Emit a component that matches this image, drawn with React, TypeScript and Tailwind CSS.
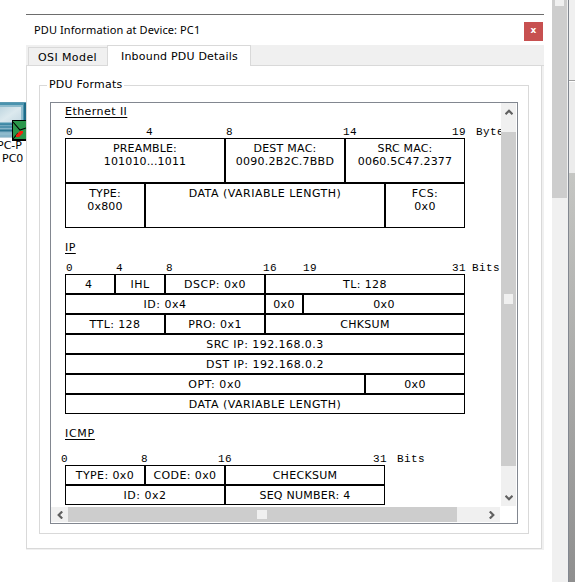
import type { ReactNode } from "react";

type Cell = { text: ReactNode; width: string };
type Tick = { text: string; width: string };

function Row({ cells, height }: { cells: Cell[]; height: string }) {
  return (
    <div className={`flex ${height}`}>
      {cells.map((cell, i) => (
        <div
          key={i}
          className={`shrink-0 whitespace-nowrap border border-black pt-[3px] text-center leading-[13px] ${cell.width}`}
        >
          {cell.text}
        </div>
      ))}
    </div>
  );
}

function Ruler({ ticks }: { ticks: Tick[] }) {
  return (
    <div className="flex h-[13px] w-[450px] pt-px font-['Liberation_Mono','Courier_New',monospace] text-[11px] leading-[13px] tracking-[0.4px]">
      {ticks.map((tick, i) => (
        <span key={i} className={`shrink-0 whitespace-nowrap ${tick.width}`}>
          {tick.text}
        </span>
      ))}
    </div>
  );
}

function Chevron({ className }: { className: string }) {
  return (
    <svg viewBox="0 0 8 6" className={`h-[6px] w-[8px] shrink-0 ${className}`} aria-hidden="true">
      <path d="M0.5 5.2 4 1.7 7.5 5.2" fill="none" stroke="#606060" strokeWidth="2.2" />
    </svg>
  );
}

function DeviceIcon() {
  return (
    <svg viewBox="0 0 26 39" className="block h-[39px] w-[26px]" aria-hidden="true">
      <defs>
        <linearGradient id="screen" x1="0" y1="0" x2="1" y2="1">
          <stop offset="0" stopColor="#bfd6e0" />
          <stop offset=".5" stopColor="#dce9ee" />
          <stop offset="1" stopColor="#c5d9e2" />
        </linearGradient>
      </defs>
      <rect width="26" height="36" y="0" fill="#86b4c8" />
      <path d="M0 0.5h26" stroke="#5c9ab2" />
      <path d="M0 1h24v21H0z" fill="#4a93ae" />
      <path d="M0 3h23v18H0z" fill="#8fbccd" />
      <rect y="5" width="21" height="15" fill="url(#screen)" />
      <path d="M24 1h2v18h-2z" fill="#1e6b88" />
      <path d="M0 22.5h12M0 25h12" stroke="#3f87a4" strokeWidth="1.5" />
      <path d="M0 28.5h12" stroke="#2d7692" strokeWidth="2" />
      <path d="M0 32h12" stroke="#8fbccd" strokeWidth="2" />
      <path d="M0 35.5h12" stroke="#b7cfd9" />
      <rect x="12.5" y="18.5" width="15" height="19" fill="#2b984c" stroke="#000" />
      <path d="M13 20l7 8 6-2M13 37l5-6" fill="none" stroke="#000" strokeWidth="1.1" />
      <path d="M16 33l4-4h3v2l-4 4h-3z" fill="#f4220b" />
      <path d="M12 38h14" stroke="#000" strokeWidth="2" />
    </svg>
  );
}

function Canvas() {
  return (
    <div className="h-[404px] w-[450px] overflow-hidden pl-[14px] text-[11px]">
      <div className="h-[22px] pt-[2px] leading-[13px] tracking-[0.45px] underline underline-offset-2">
        Ethernet II
      </div>
      <Ruler
        ticks={[
          { text: "0", width: "w-[80px] pl-px" },
          { text: "4", width: "w-[80px] pl-px" },
          { text: "8", width: "w-[118px] pl-px" },
          { text: "14", width: "w-[109px]" },
          { text: "19", width: "w-[24px]" },
          { text: "Bytes", width: "w-[40px]" },
        ]}
      />
      <div className="w-[400px]">
        <Row
          height="h-[45px]"
          cells={[
            { text: <>PREAMBLE:<br />101010...1011</>, width: "w-[160px] tracking-[0.15px]" },
            { text: <>DEST MAC:<br />0090.2B2C.7BBD</>, width: "w-[120px] tracking-[0.25px]" },
            { text: <>SRC MAC:<br />0060.5C47.2377</>, width: "w-[120px] tracking-[0.2px]" },
          ]}
        />
        <Row
          height="h-[45px]"
          cells={[
            { text: <>TYPE:<br />0x800</>, width: "w-[80px] tracking-[0.2px]" },
            { text: "DATA (VARIABLE LENGTH)", width: "w-[240px] tracking-[0.5px]" },
            { text: <>FCS:<br />0x0</>, width: "w-[80px] tracking-[0.4px]" },
          ]}
        />
      </div>
      <div className="h-[33px] pt-[13px] leading-[13px] tracking-[0.45px] underline underline-offset-2">IP</div>
      <Ruler
        ticks={[
          { text: "0", width: "w-[50px] pl-px" },
          { text: "4", width: "w-[50px] pl-px" },
          { text: "8", width: "w-[98px] pl-px" },
          { text: "16", width: "w-[40px]" },
          { text: "19", width: "w-[149px]" },
          { text: "31", width: "w-[20px]" },
          { text: "Bits", width: "w-[30px]" },
        ]}
      />
      <div className="w-[400px]">
        <Row
          height="h-[20px]"
          cells={[
            { text: "4", width: "w-[50px] pr-[3px]" },
            { text: "IHL", width: "w-[50px] tracking-[0.45px]" },
            { text: "DSCP: 0x0", width: "w-[100px] tracking-[0.5px]" },
            { text: "TL: 128", width: "w-[200px] tracking-[0.4px]" },
          ]}
        />
        <Row
          height="h-[20px]"
          cells={[
            { text: "ID: 0x4", width: "w-[200px] tracking-[0.5px]" },
            { text: "0x0", width: "w-[38px] tracking-[0.3px]" },
            { text: "0x0", width: "w-[162px] tracking-[0.3px]" },
          ]}
        />
        <Row
          height="h-[20px]"
          cells={[
            { text: "TTL: 128", width: "w-[100px] tracking-[0.4px]" },
            { text: "PRO: 0x1", width: "w-[100px] tracking-[0.4px]" },
            { text: "CHKSUM", width: "w-[200px] tracking-[0.3px]" },
          ]}
        />
        <Row
          height="h-[20px]"
          cells={[{ text: "SRC IP: 192.168.0.3", width: "w-[400px] tracking-[0.45px]" }]}
        />
        <Row
          height="h-[20px]"
          cells={[{ text: "DST IP: 192.168.0.2", width: "w-[400px] tracking-[0.45px]" }]}
        />
        <Row
          height="h-[20px]"
          cells={[
            { text: "OPT: 0x0", width: "w-[300px] tracking-[0.6px]" },
            { text: "0x0", width: "w-[100px] tracking-[0.3px]" },
          ]}
        />
        <Row
          height="h-[20px]"
          cells={[{ text: "DATA (VARIABLE LENGTH)", width: "w-[400px] tracking-[0.5px]" }]}
        />
      </div>
      <div className="h-[38px] pt-[13px] leading-[13px] tracking-[0.7px] underline underline-offset-2">ICMP</div>
      <div className="-ml-1">
        <Ruler
          ticks={[
            { text: "0", width: "w-[80px]" },
            { text: "8", width: "w-[77px]" },
            { text: "16", width: "w-[155px]" },
            { text: "31", width: "w-[24px]" },
            { text: "Bits", width: "w-[30px]" },
          ]}
        />
      </div>
      <div className="w-[320px]">
        <Row
          height="h-[20px]"
          cells={[
            { text: "TYPE: 0x0", width: "w-[80px] tracking-[0.4px]" },
            { text: "CODE: 0x0", width: "w-[80px] tracking-[0.4px]" },
            { text: "CHECKSUM", width: "w-[160px] tracking-[0.3px]" },
          ]}
        />
        <Row
          height="h-[20px]"
          cells={[
            { text: "ID: 0x2", width: "w-[160px] tracking-[0.5px]" },
            { text: "SEQ NUMBER: 4", width: "w-[160px] tracking-[0.25px]" },
          ]}
        />
      </div>
    </div>
  );
}

export default function App() {
  return (
    <div className="flex h-[582px] w-[575px] overflow-hidden bg-white font-['DejaVu_Sans',Verdana,sans-serif] text-[11px] text-black">
      <aside className="h-full w-[26px] shrink-0 overflow-hidden pt-[102px] leading-[13px]">
        <DeviceIcon />
        <div className="-ml-[3px] -mt-[2px] whitespace-nowrap">PC-P</div>
        <div className="ml-[2px] whitespace-nowrap">PC0</div>
      </aside>

      <main className="w-[518px] shrink-0 pt-[14px]">
        <header className="flex h-[31px] justify-between border-t border-[#6d6d6d] pl-2 pr-px">
          <h1 className="pt-[7px] font-['Noto_Sans','Segoe_UI',sans-serif] text-[11px] leading-4 tracking-[0.1px]">
            PDU Information at Device: PC1
          </h1>
          <button className="mt-[7px] flex h-[19px] w-[19px] items-center justify-center bg-[#c75050] pb-0.5 text-[9px] font-bold leading-none text-white">
            x
          </button>
        </header>

        <div className="flex h-[21px] items-end bg-[#f0f0f0]">
          <div className="w-[2px] self-stretch border-b border-[#d9d9d9]" />
          <div className="h-[19px] w-[79px] border border-r-0 border-[#d9d9d9] pl-[9px] pt-[3px] leading-[13px] tracking-[0.4px]">
            OSI Model
          </div>
          <div className="h-[21px] w-[144px] border border-b-0 border-[#d9d9d9] bg-white pl-[13px] pt-[4px] leading-[13px] tracking-[0.2px]">
            Inbound PDU Details
          </div>
          <div className="flex-1 self-stretch border-b border-[#d9d9d9]" />
        </div>

        <div className="h-[484px] bg-[#f0f0f0] pb-px pr-[2px]">
          <div className="h-[483px] border border-t-0 border-[#d9d9d9] bg-white px-3 pt-[12px]">
            <fieldset className="h-[456px] w-[490px] border border-[#d9d9d9] px-[10px]">
              <legend className="ml-[-3px] h-[14px] px-[2px] leading-[14px] tracking-[0.2px]">PDU Formats</legend>
              <div className="mt-[10px] h-[422px] w-[468px] border border-[#828790] bg-white">
                <div className="flex h-[404px]">
                  <Canvas />
                  <div className="flex h-[403px] w-[15px] flex-col items-center bg-[#f0f0f0]">
                    <div className="flex h-[29px] items-start pt-[6px]">
                      <Chevron className="" />
                    </div>
                    <div className="flex h-[334px] w-full items-center justify-center bg-[#cdcdcd]">
                      <div className="h-[10px] w-[9px] bg-[#f0f0f0]" />
                    </div>
                    <div className="flex flex-1 items-end pb-[5px]">
                      <Chevron className="rotate-180" />
                    </div>
                  </div>
                </div>
                <div className="flex h-[15px] w-[449px] items-center bg-[#f0f0f0]">
                  <div className="flex w-[17px] justify-center">
                    <Chevron className="-rotate-90" />
                  </div>
                  <div className="flex h-full w-[389px] items-center justify-center bg-[#cdcdcd]">
                    <div className="mr-px h-[9px] w-[10px] bg-[#f0f0f0]" />
                  </div>
                  <div className="flex flex-1 justify-end pr-1">
                    <Chevron className="rotate-90" />
                  </div>
                </div>
              </div>
            </fieldset>
          </div>
        </div>
      </main>

      <div className="ml-2 flex h-full w-4 shrink-0 flex-col bg-[#f0f0f0]">
        <div className="flex h-[198px] w-[15px] justify-center bg-[#cdcdcd]">
          <div className="h-[6px] w-[9px] bg-[#f0f0f0]" />
        </div>
      </div>
      <div className="h-full w-[7px] border-l border-[#828790]">
        <div className="h-[81px] border-b border-[#a0a0a0] bg-[#f0f0f0]" />
        <div className="h-[92px] border-t border-white bg-[#ececec]" />
        <div className="h-[409px] bg-gradient-to-b from-[#c5c6c3] to-[#8f8f8f]" />
      </div>
    </div>
  );
}
